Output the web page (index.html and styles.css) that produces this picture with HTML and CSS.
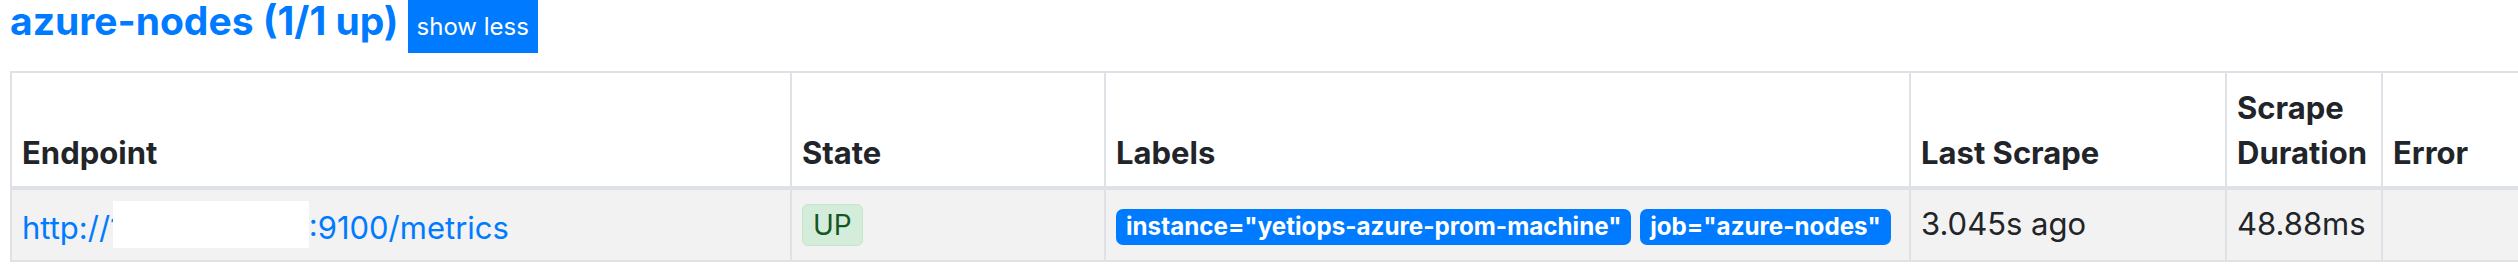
FILE: index.html
```html
<!DOCTYPE html>
<html lang="en">
<head>
  <meta charset="UTF-8">
  <title>Targets</title>
  <link rel="stylesheet" href="styles.css">
</head>
<body>

<div class="job-header">
  <h2 class="job-title">azure-nodes (1/1 up)</h2>
  <button class="toggle-btn">show less</button>
</div>

<table class="targets">
  <colgroup>
    <col class="col-endpoint">
    <col class="col-state">
    <col class="col-labels">
    <col class="col-scrape">
    <col class="col-duration">
    <col class="col-error">
  </colgroup>
  <thead>
    <tr>
      <th>Endpoint</th>
      <th>State</th>
      <th>Labels</th>
      <th>Last Scrape</th>
      <th>Scrape Duration</th>
      <th>Error</th>
    </tr>
  </thead>
  <tbody>
    <tr>
      <td><a class="endpoint" href="#">http://1<span class="redacted"></span>:9100/metrics</a></td>
      <td><span class="state-up">UP</span></td>
      <td>
        <span class="label-badge">instance="yetiops-azure-prom-machine"</span>
        <span class="label-badge">job="azure-nodes"</span>
      </td>
      <td>3.045s ago</td>
      <td>48.88ms</td>
      <td></td>
    </tr>
  </tbody>
</table>

</body>
</html>
```

FILE: styles.css
```css
body {
  margin: 0;
  padding: 0 0 0 10px;
  background: #fff;
  font-family: 'Inter', 'Liberation Sans', Arial, sans-serif;
  color: #212529;
  overflow: hidden;
}

.job-header {
  display: flex;
  align-items: flex-start;
  height: 61px;
}

.job-title {
  margin: 0;
  font-size: 39px;
  line-height: 42px;
  font-weight: 700;
  color: #007bff;
}

.toggle-btn {
  margin-left: 9px;
  height: 53px;
  padding: 0 9px;
  border: none;
  border-radius: 0;
  background-color: #007bff;
  color: white;
  font-family: inherit;
  font-size: 24px;
  line-height: 53px;
  cursor: pointer;
}

.targets {
  margin-top: 10px;
  width: 2511px;
  table-layout: fixed;
  border-collapse: collapse;
  font-size: 31px;
  line-height: 45px;
}

.col-endpoint { width: 780px; }
.col-state { width: 314px; }
.col-labels { width: 805px; }
.col-scrape { width: 316px; }
.col-duration { width: 156px; }
.col-error { width: 140px; }

.targets th,
.targets td {
  border: 2px solid #dee2e6;
  text-align: left;
}

.targets th {
  padding: 12px 10px 11px;
  vertical-align: bottom;
  font-weight: 700;
  border-bottom-width: 4px;
}

.targets td {
  padding: 11px 10px 10px;
  vertical-align: top;
  white-space: nowrap;
}

.targets tbody tr {
  background-color: #f2f2f2;
}

.endpoint {
  color: #007bff;
  text-decoration: none;
}

.redacted {
  display: inline-block;
  width: 196px;
  height: 47px;
  margin-left: -10px;
  vertical-align: -9px;
  background: #fff;
}

.state-up {
  display: inline-block;
  padding: 4px 10px;
  font-size: 28px;
  line-height: 32px;
  color: #155724;
  background-color: #d4edda;
  border: 1px solid #c3e6cb;
  border-radius: 6px;
}

.label-badge {
  display: inline-block;
  padding: 6px 10px;
  font-size: 24.2px;
  line-height: 24px;
  font-weight: 700;
  color: #fff;
  background-color: #007bff;
  border-radius: 7px;
}
```
